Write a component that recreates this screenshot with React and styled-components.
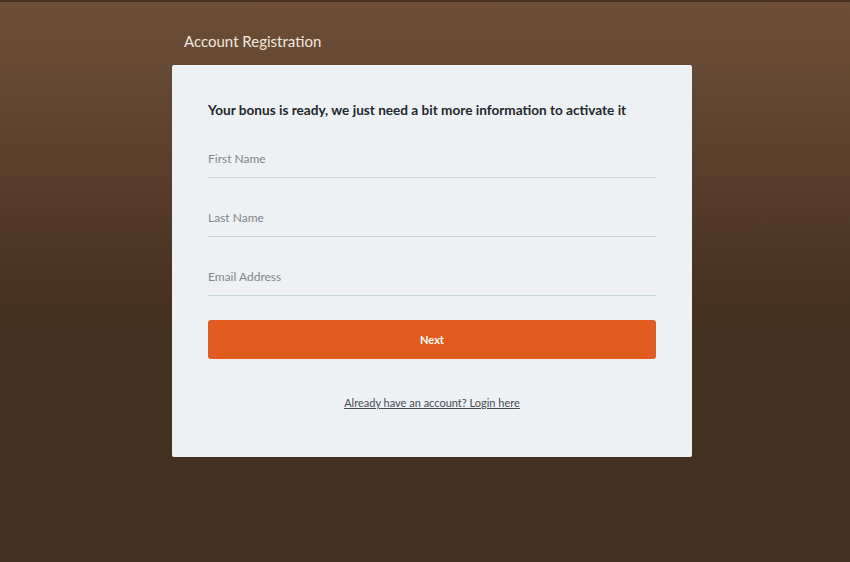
import React from 'react';
import styled, { createGlobalStyle } from 'styled-components';

const GlobalStyle = createGlobalStyle`
  html, body {
    margin: 0;
    padding: 0;
    height: 100%;
  }

  body {
    font-family: Lato, "Open Sans", "Liberation Sans", sans-serif;
    background: #44301f;
  }
`;

const Page = styled.div`
  min-height: 562px;
  box-sizing: border-box;
  border-top: 2px solid #4a3222;
  background: linear-gradient(
    to bottom,
    #6c4e37 0px,
    #664a34 60px,
    #583d2a 180px,
    #48311f 290px,
    #44301f 340px,
    #44301f 100%
  );
  display: flex;
  justify-content: center;
`;

const Column = styled.div`
  width: 520px;
  padding-top: 30px;
  margin-left: 14px;
`;

const Title = styled.h1`
  margin: 0 0 15px 12px;
  font-size: 15px;
  font-weight: 400;
  line-height: 18px;
  color: #f1e8df;
`;

const Card = styled.div`
  background: #eef1f4;
  border-radius: 2px;
  padding: 35px 36px 48px;
  box-sizing: border-box;
  height: 392px;
`;

const Heading = styled.h2`
  margin: 0 0 30px;
  font-size: 13.6px;
  font-weight: 700;
  line-height: 20px;
  color: #23282c;
`;

const Field = styled.label`
  display: block;
  border-bottom: 1px solid #c6d5d9;
  padding: 0 0 10px;
  margin-bottom: 31px;

  input {
    all: unset;
    display: block;
    width: 100%;
    font-family: inherit;
    font-size: 12px;
    line-height: 17px;
    color: #333;

    &::placeholder {
      color: #7d878c;
    }
  }
`;

const NextButton = styled.button`
  display: block;
  width: 100%;
  height: 39px;
  margin-top: -7px;
  border: none;
  border-radius: 3px;
  background: #e05b1d;
  color: #fff;
  font-family: inherit;
  font-size: 11px;
  font-weight: 700;
  cursor: pointer;
`;

const LoginLine = styled.p`
  margin: 37px 0 0;
  text-align: center;
  font-size: 11px;
  line-height: 14px;

  a {
    color: #464c52;
    text-decoration: underline;
  }
`;

const fields = ['First Name', 'Last Name', 'Email Address'];

const App = () => (
  <>
    <GlobalStyle />
    <Page>
      <Column>
        <Title>Account Registration</Title>
        <Card>
          <Heading>
            Your bonus is ready, we just need a bit more information to activate it
          </Heading>
          {fields.map(f => (
            <Field key={f}>
              <input placeholder={f} />
            </Field>
          ))}
          <NextButton>Next</NextButton>
          <LoginLine>
            <a href="#login">Already have an account? Login here</a>
          </LoginLine>
        </Card>
      </Column>
    </Page>
  </>
);

export default App;
